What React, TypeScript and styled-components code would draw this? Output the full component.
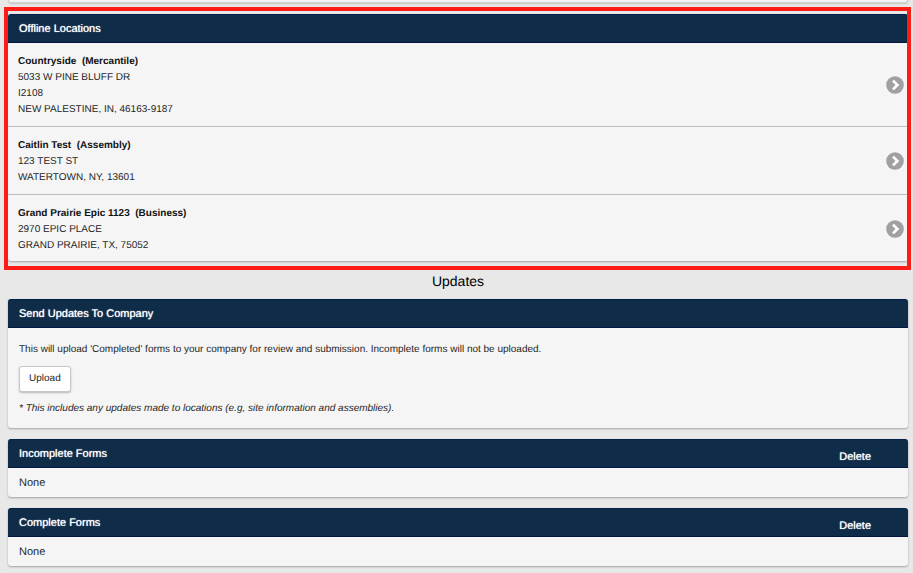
import React from 'react';
import styled, { createGlobalStyle } from 'styled-components';

const GlobalStyle = createGlobalStyle`
  * { box-sizing: border-box; }
  body {
    margin: 0;
    background: #e8e8e8;
    color: #262626;
    font: 10px/16px "Liberation Sans", Arial, Helvetica, sans-serif;
    text-rendering: geometricPrecision;
  }
`;

const Page = styled.main`
  display: flex;
  flex-direction: column;
  gap: 11px;
  padding: 0 5px 5px 8px;
`;

const PreviousPanel = styled.div`
  height: 3px;
  background: #f4f4f4;
  border: 1px solid #d0d0d0;
  border-top: 0;
  border-radius: 0 0 3px 3px;
  box-shadow: 0 1px 2px rgba(0, 0, 0, 0.15);
`;

const Panel = styled.section`
  background: #f5f5f5;
  border-radius: 3px;
  box-shadow: 0 1px 2px rgba(0, 0, 0, 0.3);
`;

const Highlight = styled.div`
  position: relative;

  &::after {
    content: '';
    position: absolute;
    inset: -7px -3px -9px -4px;
    border: 4px solid #fd1c17;
    pointer-events: none;
  }
`;

const PanelHeader = styled.header`
  display: flex;
  justify-content: space-between;
  height: 29px;
  padding: 0 37px 0 11px;
  background: #0f2c48;
  border-top: 1px solid #04214a;
  border-bottom: 1px solid #041644;
  border-radius: 3px 3px 0 0;
  color: #fff;
`;

const PanelTitle = styled.h2`
  margin: 0;
  font-size: 11px;
  font-weight: 400;
  line-height: 29px;
  text-shadow: 0 0 1px #fff;
`;

const DeleteButton = styled.button`
  margin: 0;
  padding: 7px 0 0;
  border: 0;
  background: none;
  color: #fff;
  font: inherit;
  font-size: 11px;
  text-rendering: inherit;
  text-shadow: 0 0 1px #fff;
  cursor: pointer;
`;

const LocationList = styled.ul`
  margin: 0;
  padding: 0;
  list-style: none;
`;

const LocationItem = styled.li`
  & + & { border-top: 1px solid #bdbdbd; }
`;

const LocationLink = styled.a`
  display: flex;
  align-items: center;
  justify-content: space-between;
  padding: 11px 4px 8px 10px;
  color: inherit;
  text-decoration: none;

  ${LocationItem}:last-child & { padding-bottom: 7px; }
`;

const LocationName = styled.strong`
  display: block;
  white-space: pre;
  color: #111;
`;

const AddressLine = styled.span`
  display: block;
`;

const Chevron = styled.svg`
  width: 18px;
  height: 18px;
  flex: none;
  margin-bottom: 2px;
`;

const SectionTitle = styled.h1`
  margin: 0 0 -2px;
  color: #000;
  font-size: 14px;
  font-weight: 400;
  line-height: 18px;
  text-align: center;
`;

const UploadBody = styled.div`
  padding: 14px 11px 11px;
`;

const Message = styled.p`
  margin: 0;
`;

const UploadButton = styled.button`
  display: block;
  height: 26px;
  margin: 8px 0 9px;
  padding: 0 9px;
  border: 1px solid #c8c8c8;
  border-radius: 3px;
  background: #fff;
  box-shadow: 0 1px 2px rgba(0, 0, 0, 0.25);
  color: #262626;
  font: inherit;
  text-rendering: inherit;
  cursor: pointer;
`;

const Note = styled(Message)`
  font-style: italic;
`;

const EmptyState = styled.p`
  margin: 0;
  padding: 2px 11px 0;
  font-size: 11px;
  line-height: 27px;
`;

const locations = [
  { name: 'Countryside  (Mercantile)', address: ['5033 W PINE BLUFF DR', 'I2108', 'NEW PALESTINE, IN, 46163-9187'] },
  { name: 'Caitlin Test  (Assembly)', address: ['123 TEST ST', 'WATERTOWN, NY, 13601'] },
  { name: 'Grand Prairie Epic 1123  (Business)', address: ['2970 EPIC PLACE', 'GRAND PRAIRIE, TX, 75052'] },
];

function FormsPanel({ title }: { title: string }) {
  return (
    <Panel>
      <PanelHeader>
        <PanelTitle>{title}</PanelTitle>
        <DeleteButton type="button" aria-label={`Delete ${title}`}>Delete</DeleteButton>
      </PanelHeader>
      <EmptyState>None</EmptyState>
    </Panel>
  );
}

export default function App() {
  return (
    <>
      <GlobalStyle />
      <Page>
        <PreviousPanel />
        <Highlight>
          <Panel>
            <PanelHeader><PanelTitle>Offline Locations</PanelTitle></PanelHeader>
            <LocationList>
              {locations.map(({ name, address }) => (
                <LocationItem key={name}>
                  <LocationLink href="#location">
                    <span>
                      <LocationName>{name}</LocationName>
                      {address.map((line) => <AddressLine key={line}>{line}</AddressLine>)}
                    </span>
                    <Chevron viewBox="0 0 18 18" aria-hidden="true">
                      <circle cx="9" cy="9" r="8.8" fill="#a0a0a0" />
                      <path d="M7 4.6 11.4 9 7 13.4" fill="none" stroke="#fff" strokeWidth="2.7" />
                    </Chevron>
                  </LocationLink>
                </LocationItem>
              ))}
            </LocationList>
          </Panel>
        </Highlight>
        <SectionTitle>Updates</SectionTitle>
        <Panel>
          <PanelHeader><PanelTitle>Send Updates To Company</PanelTitle></PanelHeader>
          <UploadBody>
            <Message>This will upload 'Completed' forms to your company for review and submission. Incomplete forms will not be uploaded.</Message>
            <UploadButton type="button">Upload</UploadButton>
            <Note>* This includes any updates made to locations (e.g, site information and assemblies).</Note>
          </UploadBody>
        </Panel>
        <FormsPanel title="Incomplete Forms" />
        <FormsPanel title="Complete Forms" />
      </Page>
    </>
  );
}
